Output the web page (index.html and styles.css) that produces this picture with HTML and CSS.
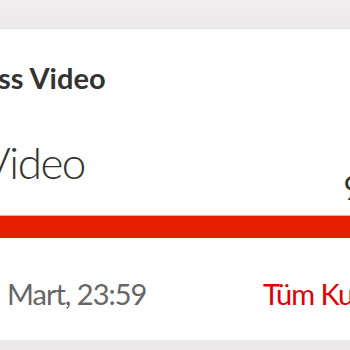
FILE: index.html
```html
<!DOCTYPE html>
<html>
<head>
<meta charset="utf-8">
<link rel="stylesheet" href="styles.css">
</head>
<body>
<div class="top"></div>
<div class="card">
  <div class="title">ss Video</div>
  <div class="row">
    <div class="big">Video</div>
    <div class="amount">9</div>
  </div>
  <div class="bar"></div>
  <div class="foot">
    <div class="date">Mart, 23:59</div>
    <div class="link">Tüm Kullanımlar</div>
  </div>
</div>
</body>
</html>
```
FILE: styles.css
```css
html, body {
  margin: 0;
  padding: 0;
  width: 350px;
  height: 350px;
  overflow: hidden;
  background: #ebe9e9;
  font-family: Lato, "Open Sans", sans-serif;
}
.top {
  height: 28px;
  background: linear-gradient(#f0eeee, #eceaea);
  border-bottom: 1px solid #e2e0e0;
}
.card {
  background: #fff;
  height: 311px;
  display: flex;
  flex-direction: column;
  overflow: hidden;
}
.title {
  margin-top: 34px;
  margin-left: -2px;
  font-size: 29px;
  font-weight: 700;
  color: #333;
  line-height: 29px;
  white-space: nowrap;
}
.row {
  display: flex;
  justify-content: space-between;
  align-items: flex-end;
  margin-top: 42px;
  height: 50px;
  white-space: nowrap;
}
.big {
  margin-left: -18px;
  font-size: 44px;
  font-weight: 300;
  letter-spacing: -1.5px;
  color: #333;
  line-height: 44px;
}
.amount {
  margin-right: -12px;
  font-size: 32px;
  color: #333;
  line-height: 32px;
  margin-bottom: -20px;
}
.bar {
  margin-top: 31px;
  height: 23px;
  background: #e52000;
  border-top: 1px solid #f3a89a;
  box-sizing: border-box;
}
.foot {
  display: grid;
  grid-template-columns: 263px auto;
  margin-top: 41px;
  white-space: nowrap;
  font-size: 29px;
  line-height: 29px;
  letter-spacing: -1px;
}
.date {
  padding-left: 7px;
  color: #666;
}
.link {
  color: #e00000;
}
```
